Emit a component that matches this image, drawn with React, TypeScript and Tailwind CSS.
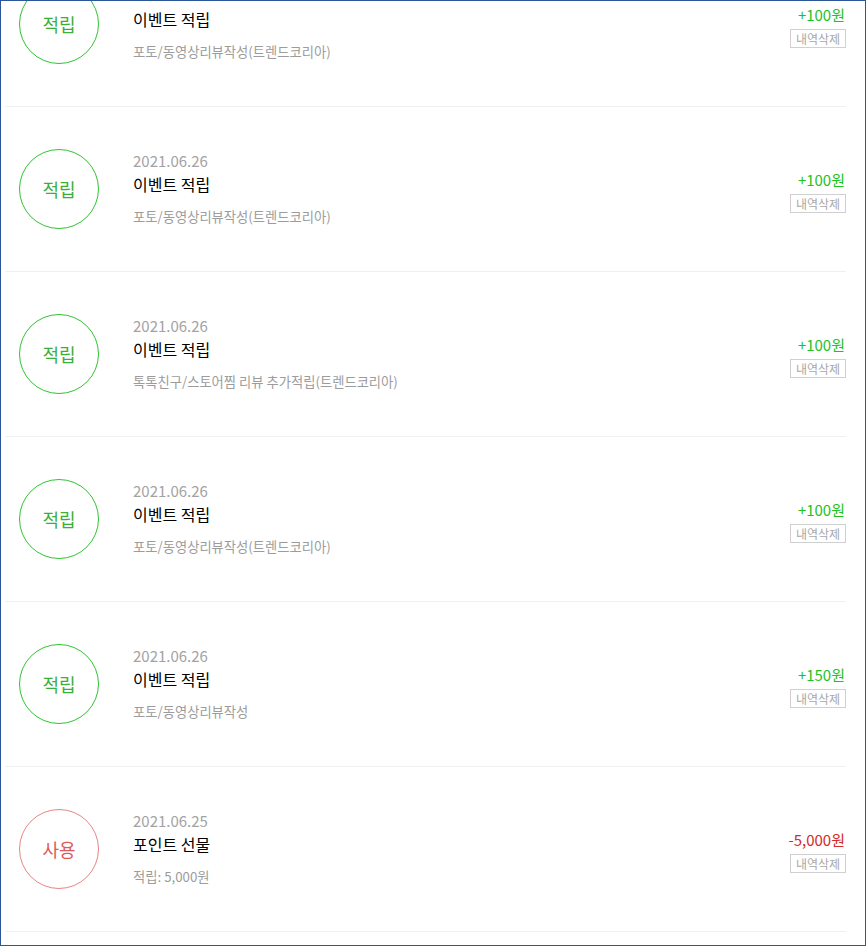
import React from "react";

type Row = {
  kind: "save" | "use";
  date: string;
  title: string;
  sub: string;
  amount: string;
};

const rows: Row[] = [
  { kind: "save", date: "", title: "이벤트 적립", sub: "포토/동영상리뷰작성(트렌드코리아)", amount: "+100원" },
  { kind: "save", date: "2021.06.26", title: "이벤트 적립", sub: "포토/동영상리뷰작성(트렌드코리아)", amount: "+100원" },
  { kind: "save", date: "2021.06.26", title: "이벤트 적립", sub: "톡톡친구/스토어찜 리뷰 추가적립(트렌드코리아)", amount: "+100원" },
  { kind: "save", date: "2021.06.26", title: "이벤트 적립", sub: "포토/동영상리뷰작성(트렌드코리아)", amount: "+100원" },
  { kind: "save", date: "2021.06.26", title: "이벤트 적립", sub: "포토/동영상리뷰작성", amount: "+150원" },
  { kind: "use", date: "2021.06.25", title: "포인트 선물", sub: "적립: 5,000원", amount: "-5,000원" },
];

function Item({ r }: { r: Row }) {
  const save = r.kind === "save";
  return (
    <li className="flex h-[165px] items-center border-b border-[#f0f0f0] pl-[14px]">
      <div
        className={
          save
            ? "flex h-[80px] w-[80px] shrink-0 items-center justify-center rounded-full border border-[#2fc52f] text-[18px] text-[#3aaf3a]"
            : "flex h-[80px] w-[80px] shrink-0 items-center justify-center rounded-full border border-[#e88484] text-[18px] text-[#de5a5a]"
        }
      >
        {save ? "적립" : "사용"}
      </div>
      <div className="ml-[34px] flex flex-1 flex-col">
        <div className="h-[20px] text-[15px] leading-[20px] text-[#a3a3a3]">{r.date}</div>
        <div className="mt-[2px] text-[16px] leading-[22px] text-black">{r.title}</div>
        <div className="mt-[12px] text-[13.3px] leading-[20px] text-[#9c9c9c]">{r.sub}</div>
      </div>
      <div className="mt-[5px] flex flex-col items-end">
        <div
          className={
            save
              ? "pr-[1px] text-[15px] leading-[20px] text-[#1fc21f]"
              : "pr-[1px] text-[15px] leading-[20px] text-[#d42a2a]"
          }
        >
          {r.amount}
        </div>
        <div className="mt-[4px] flex h-[19px] w-[56px] items-center justify-center border border-[#d0d0d0] text-[12px] leading-none text-[#a8a8a8]">
          내역삭제
        </div>
      </div>
    </li>
  );
}

export default function App() {
  return (
    <div
      className="h-[946px] w-[866px] overflow-hidden border border-[#2b579a] bg-white"
      style={{ fontFamily: '"Noto Sans CJK KR", "Noto Sans", sans-serif' }}
    >
      <ul className="-mt-[59px] ml-[4px] w-[841px]">
        {rows.map((r, i) => (
          <Item key={i} r={r} />
        ))}
        <li className="h-[165px]" />
      </ul>
    </div>
  );
}
